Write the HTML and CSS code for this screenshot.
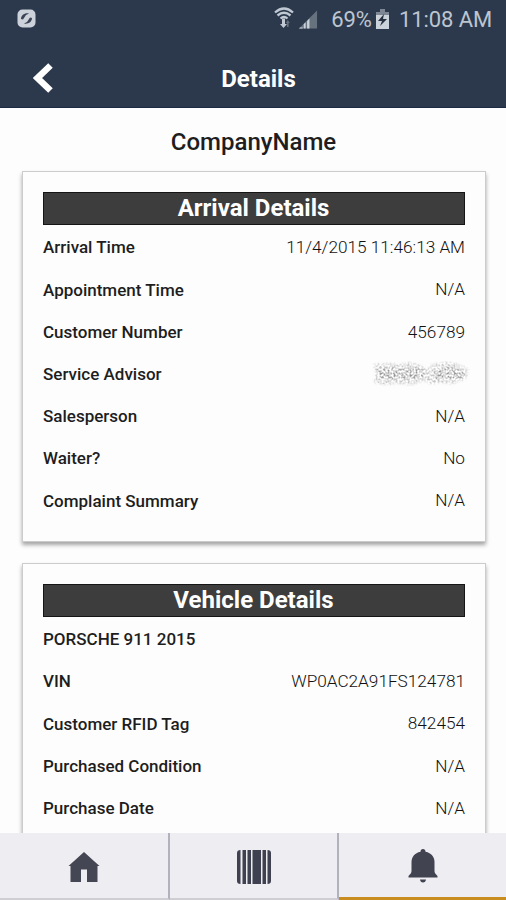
FILE: index.html
```
<!DOCTYPE html>
<html lang="en">
<head>
	<meta charset="UTF-8">
	<title>Details</title>
	<link rel="stylesheet" href="styles.css">
</head>
<body>
<div class="statusbar">
	<svg class="sync" width="19" height="19" viewBox="0 0 19 19">
		<rect x=".5" y=".5" width="18" height="18" rx="5" fill="#ccd1da"/>
		<path d="M4 10c0-4 4-6.500 8-5.500L9 6 6 10.500zM15 9c0 4-4 6.500-8 5.500l3-1.500 3-4.500z" fill="#3a4354"/>
	</svg>
	<div class="status">
		<svg class="wifi" width="20" height="22" viewBox="0 0 20 22">
			<g fill="none" stroke="#c0c8d3" stroke-width="2.300">
				<path d="M1 5.500Q10-2.500 19 5.500"/>
				<path d="M3.500 8.500Q10 3 16.500 8.500"/>
				<path d="M6.500 11.500Q10 8.500 13.500 11.500"/>
			</g>
			<path d="M8 11.500h3v5.500h2l-3.500 4L6 17h2z" fill="#c0c8d3"/>
			<path d="M13 20v-4h-1.200l2-3 2 3h-1.200v4z" fill="#66717f"/>
		</svg>
		<svg class="signal" width="19" height="19" viewBox="0 0 20 19">
			<path d="M0 19L19 0v19z" fill="#67727f"/>
			<path d="M1 18h3v1H0zM5 14.500l2-2V19H5zM8.500 11l2.500-2.500V19H8.500z" fill="#c9d0d9"/>
		</svg>
		<span class="percent">69%</span>
		<svg class="battery" width="13" height="20" viewBox="0 0 13 20">
			<path d="M4 0h5v3h4v4H0V3h4z" fill="#7d8793"/>
			<path d="M0 6h13v14H0z" fill="#ccd2d9"/>
			<path d="M8 5L2 12h4l-2 5 7-7H7z" fill="#26303e"/>
		</svg>
		<span class="clock">11:08 AM</span>
	</div>
</div>
<div class="header">
	<svg class="back" width="20" height="30" viewBox="0 0 20 30">
		<path d="M17.500 2.500L4.500 15l13 12.500" fill="none" stroke="#fff" stroke-width="6.500"/>
	</svg>
	<h1>Details</h1>
</div>
<div class="content">
	<h2 class="company">CompanyName</h2>
	<div class="card">
		<h3>Arrival Details</h3>
		<ul>
			<li><b>Arrival Time</b><span>11/4/2015 11:46:13 AM</span></li>
			<li><b>Appointment Time</b><span>N/A</span></li>
			<li><b>Customer Number</b><span>456789</span></li>
			<li><b>Service Advisor</b>
				<svg class="scribble" width="98" height="26" viewBox="0 0 98 26">
					<filter id="speckle" x="-.05" y="-.2" width="1.100" height="1.400">
						<feTurbulence type="fractalNoise" baseFrequency=".5" numOctaves="2" seed="4"/>
						<feColorMatrix values="0 0 0 0 .3  0 0 0 0 .3  0 0 0 0 .3  2.800 0 0 0 -1.050" result="n"/>
						<feGaussianBlur in="SourceGraphic" stdDeviation="1.300" result="s"/>
						<feComposite in="n" in2="s" operator="in"/>
					</filter>
					<g filter="url(#speckle)">
						<path d="M1 3l16-1 10 1 12-2 12 4 4 4 5-6 14-2 14 2 9 6-3 9-13 5-13-1-10 1-6-3-12 4-14-1-14 1-10-2 2-9z" fill-opacity=".55"/>
						<path d="M5 9l12-2 12 1 12-2 10 4 1 6-12 2-12-1-12 2-10-3zM63 10l12-4 14 3 4 5-6 4-12-1-12 1z"/>
					</g>
				</svg>
			</li>
			<li><b>Salesperson</b><span>N/A</span></li>
			<li><b>Waiter?</b><span>No</span></li>
			<li><b>Complaint Summary</b><span>N/A</span></li>
		</ul>
	</div>
	<!--/arrival-->
	<div class="card">
		<h3>Vehicle Details</h3>
		<ul>
			<li><b>PORSCHE 911 2015</b></li>
			<li><b>VIN</b><span>WP0AC2A91FS124781</span></li>
			<li><b>Customer RFID Tag</b><span>842454</span></li>
			<li><b>Purchased Condition</b><span>N/A</span></li>
			<li><b>Purchase Date</b><span>N/A</span></li>
		</ul>
	</div>
	<!--/vehicle-->
</div>
<div class="tabs">
	<div class="tab">
		<svg width="32" height="30" viewBox="0 0 32 30">
			<path d="M16 0l15.500 14H29.500v16H19V17.500h-6V30H2.500V14H.5z" fill="#444653"/>
		</svg>
	</div>
	<div class="tab">
		<svg width="34" height="34" viewBox="0 0 34 34">
			<path d="M3.500 0v34Q0 34 0 31V3Q0 0 3.500 0zM5.500 0h3.500v34h-3.500zM10.500 0h3.500v34h-3.500zM15.500 0h8.500v34h-8.500zM25.500 0h3.500v34h-3.500zM30.500 0q3.500 0 3.500 3v28q0 3-3.500 3z" fill="#3f4150"/>
		</svg>
	</div>
	<div class="tab active">
		<svg width="32" height="34" viewBox="0 0 32 34">
			<path d="M16 0c1.500 0 2.500 1 2.500 2.700C24.500 4 27.500 8 27.500 13v9c0 2 1.500 3.500 3 5v1.500h-29V27c1.500-1.500 3-3 3-5v-9c0-5 3-9 9-10.300C13.500 1 14.500 0 16 0zM13 30.500h6c-.3 2-1.300 3-3 3s-2.700-1-3-3z" fill="#414351"/>
		</svg>
	</div>
</div>
</body>
</html>
```
FILE: styles.css
```
body,h1,h2,h3,ul,li {margin:0;padding:0;}
body {
	display:flex;
	flex-direction:column;
	height:900px;
	overflow:hidden;
	background:#fdfdfd;
	color:#1e1e1e;
	font:17px/1.2 Roboto,sans-serif;
}
svg {
	display:block;
	flex:none;
}
.statusbar {
	display:flex;
	justify-content:space-between;
	align-items:center;
	height:38px;
	padding:0 14px 0 17px;
	background:#2c394c;
	color:#bdc5d0;
	font-size:22px;
}
.sync {
	margin-bottom:1px;
}
.status {
	display:flex;
	align-items:center;
	padding-top:2px;
}
.wifi {
	margin-bottom:4px;
}
.signal {
	margin:0 13px 0 5px;
}
.battery {
	margin:0 10px 2px 4px;
}
.clock {
	letter-spacing:-.1px;
}
.header {
	display:grid;
	grid-template-columns:60px 1fr 60px;
	align-items:center;
	height:70px;
	padding:10px 0 0 11px;
	box-sizing:border-box;
	border-bottom:1px solid #1d2a43;
	background:#2c394c;
	color:#fff;
}
.back {
	margin-left:22px;
}
h1 {
	margin-top:4px;
	font-size:24px;
	font-weight:700;
	text-align:center;
}
.content {
	flex:1;
	min-height:0;
	overflow:hidden;
	padding:0 20px 0 22px;
}
.company {
	padding:6px 1px 0 0;
	font-size:24px;
	font-weight:500;
	line-height:57px;
	text-align:center;
}
.card {
	margin-bottom:21px;
	padding:20px 20px 19px;
	border:1px solid #ccc;
	box-shadow:0 3px 4px rgba(0,0,0,.35);
}
.card h3 {
	height:31px;
	margin-bottom:1.500px;
	padding-right:1px;
	border:1px solid #151515;
	background:#3d3d3d;
	color:#fff;
	font-size:24px;
	font-weight:700;
	line-height:30px;
	text-align:center;
}
.card ul {
	list-style:none;
}
.card li {
	display:flex;
	justify-content:space-between;
	align-items:center;
	height:42.200px;
}
.card b {
	font-weight:500;
}
.card span {
	font-weight:300;
	font-size:17.200px;
	color:#111;
}
.scribble {
	margin-right:-5px;
}
.tabs {
	display:grid;
	grid-template-columns:170px 169px 1fr;
	height:67px;
	background:#eeedf2;
}
.tab {
	display:flex;
	justify-content:center;
	align-items:center;
	padding-top:2px;
	border-right:2px solid #b2b2be;
	border-bottom:2px solid #ceced3;
}
.tab.active {
	border-right:0;
	border-bottom:3px solid #c88c20;
}
```
